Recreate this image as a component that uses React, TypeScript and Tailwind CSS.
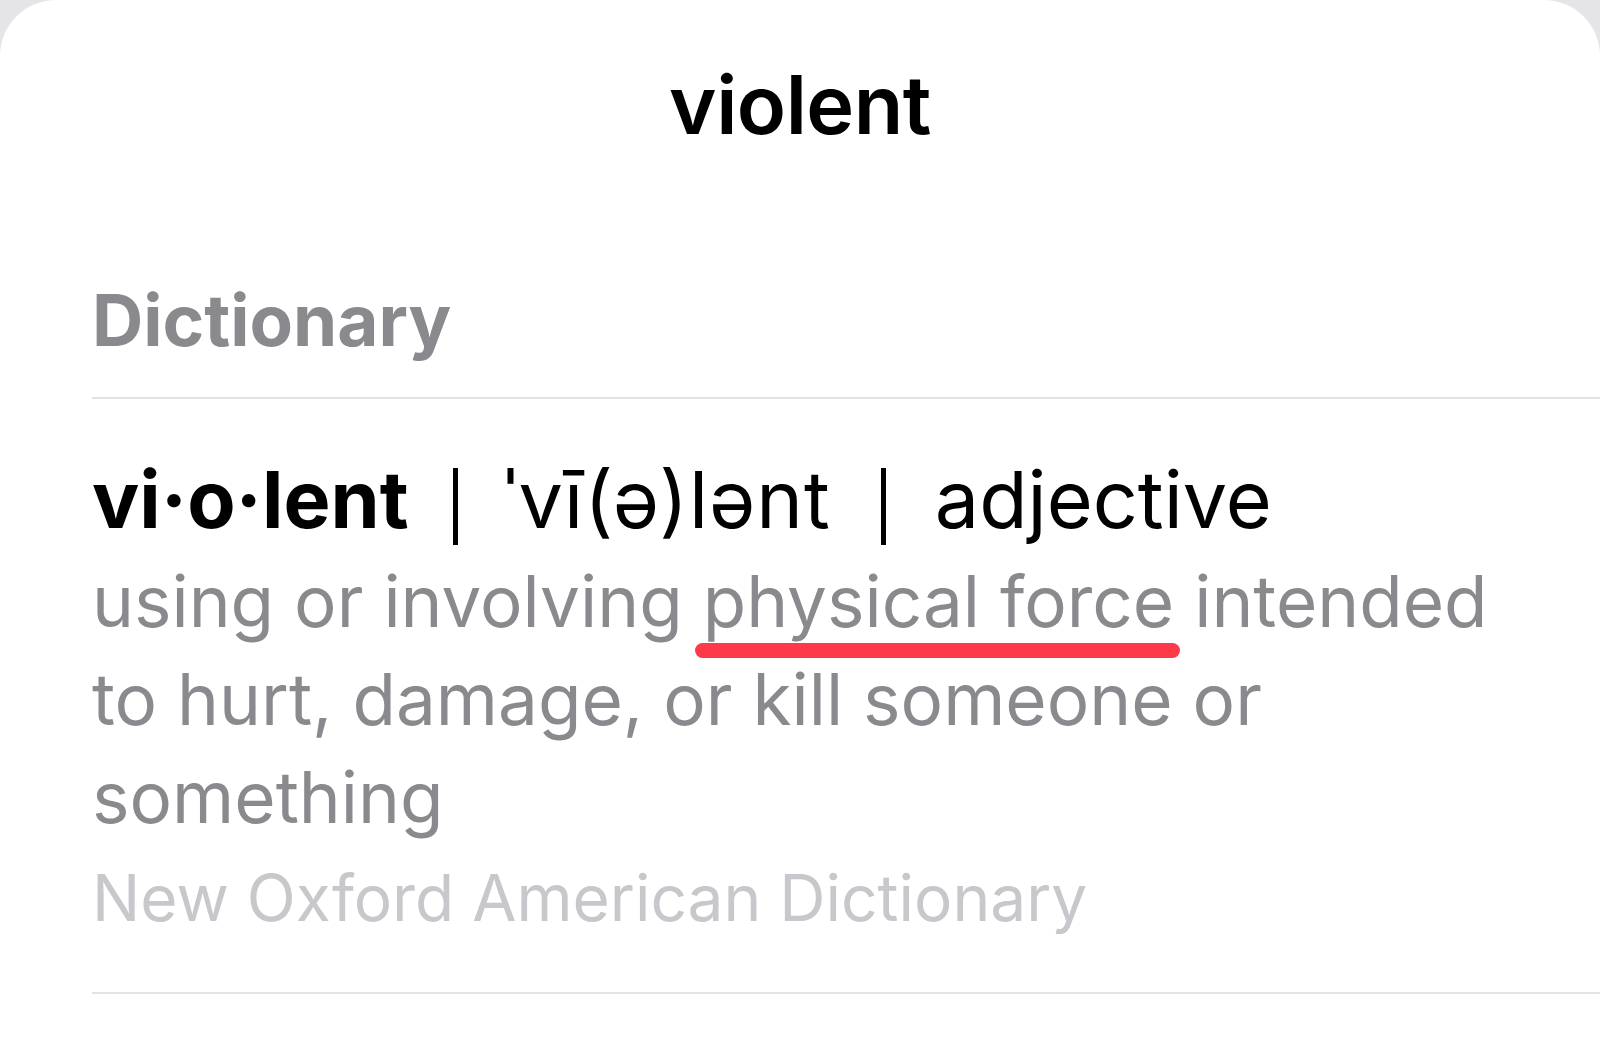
import React from "react";

function Bar({ className }: { className: string }) {
  return <span className={"inline-block w-[5px] h-[77px] bg-black align-[-17px] " + className} />;
}

export default function App() {
  return (
    <div
      className="w-[1600px] h-[1050px] bg-[#e5e5e7] overflow-hidden"
      style={{ fontFamily: "Inter, 'Noto Sans', sans-serif" }}
    >
      <div className="w-full h-full bg-white rounded-t-[56px] flex flex-col">
        <div className="mt-[55px] h-[100px] leading-[100px] text-center text-[81px] font-semibold text-black tracking-[-0.5px]">
          violent
        </div>
        <div className="pl-[92px] flex flex-col">
          <div className="mt-[120px] h-[90px] leading-[90px] text-[71px] font-bold text-[#8a8a8e]">
            Dictionary
          </div>
          <div className="mt-[32px] h-[2px] bg-[#e3e3e6]" />
          <div className="mt-[50px] h-[100px] leading-[100px] text-[79px] text-black whitespace-nowrap">
            <span className="font-bold">vi·o·lent</span>
            <Bar className="ml-[44px] mr-[46px]" />
            <span className="tracking-[1px]">ˈvī(ə)lənt</span>
            <Bar className="ml-[50px] mr-[49px]" />
            <span>adjective</span>
          </div>
          <div className="mt-[3px] leading-[98px] text-[71px] text-[#8a8a8e] whitespace-nowrap">
            using or involving{" "}
            <span className="relative">
              physical force
              <span className="absolute left-[-8px] right-[-6px] top-[85px] h-[15px] rounded-full bg-[#fd3a4a]" />
            </span>{" "}
            intended
            <br />
            to hurt, damage, or kill someone or
            <br />
            something
          </div>
          <div className="mt-[12px] h-[80px] leading-[80px] text-[64px] text-[#c7c7cc] whitespace-nowrap">
            New Oxford American Dictionary
          </div>
          <div className="mt-[54px] h-[2px] bg-[#e3e3e6]" />
        </div>
      </div>
    </div>
  );
}
